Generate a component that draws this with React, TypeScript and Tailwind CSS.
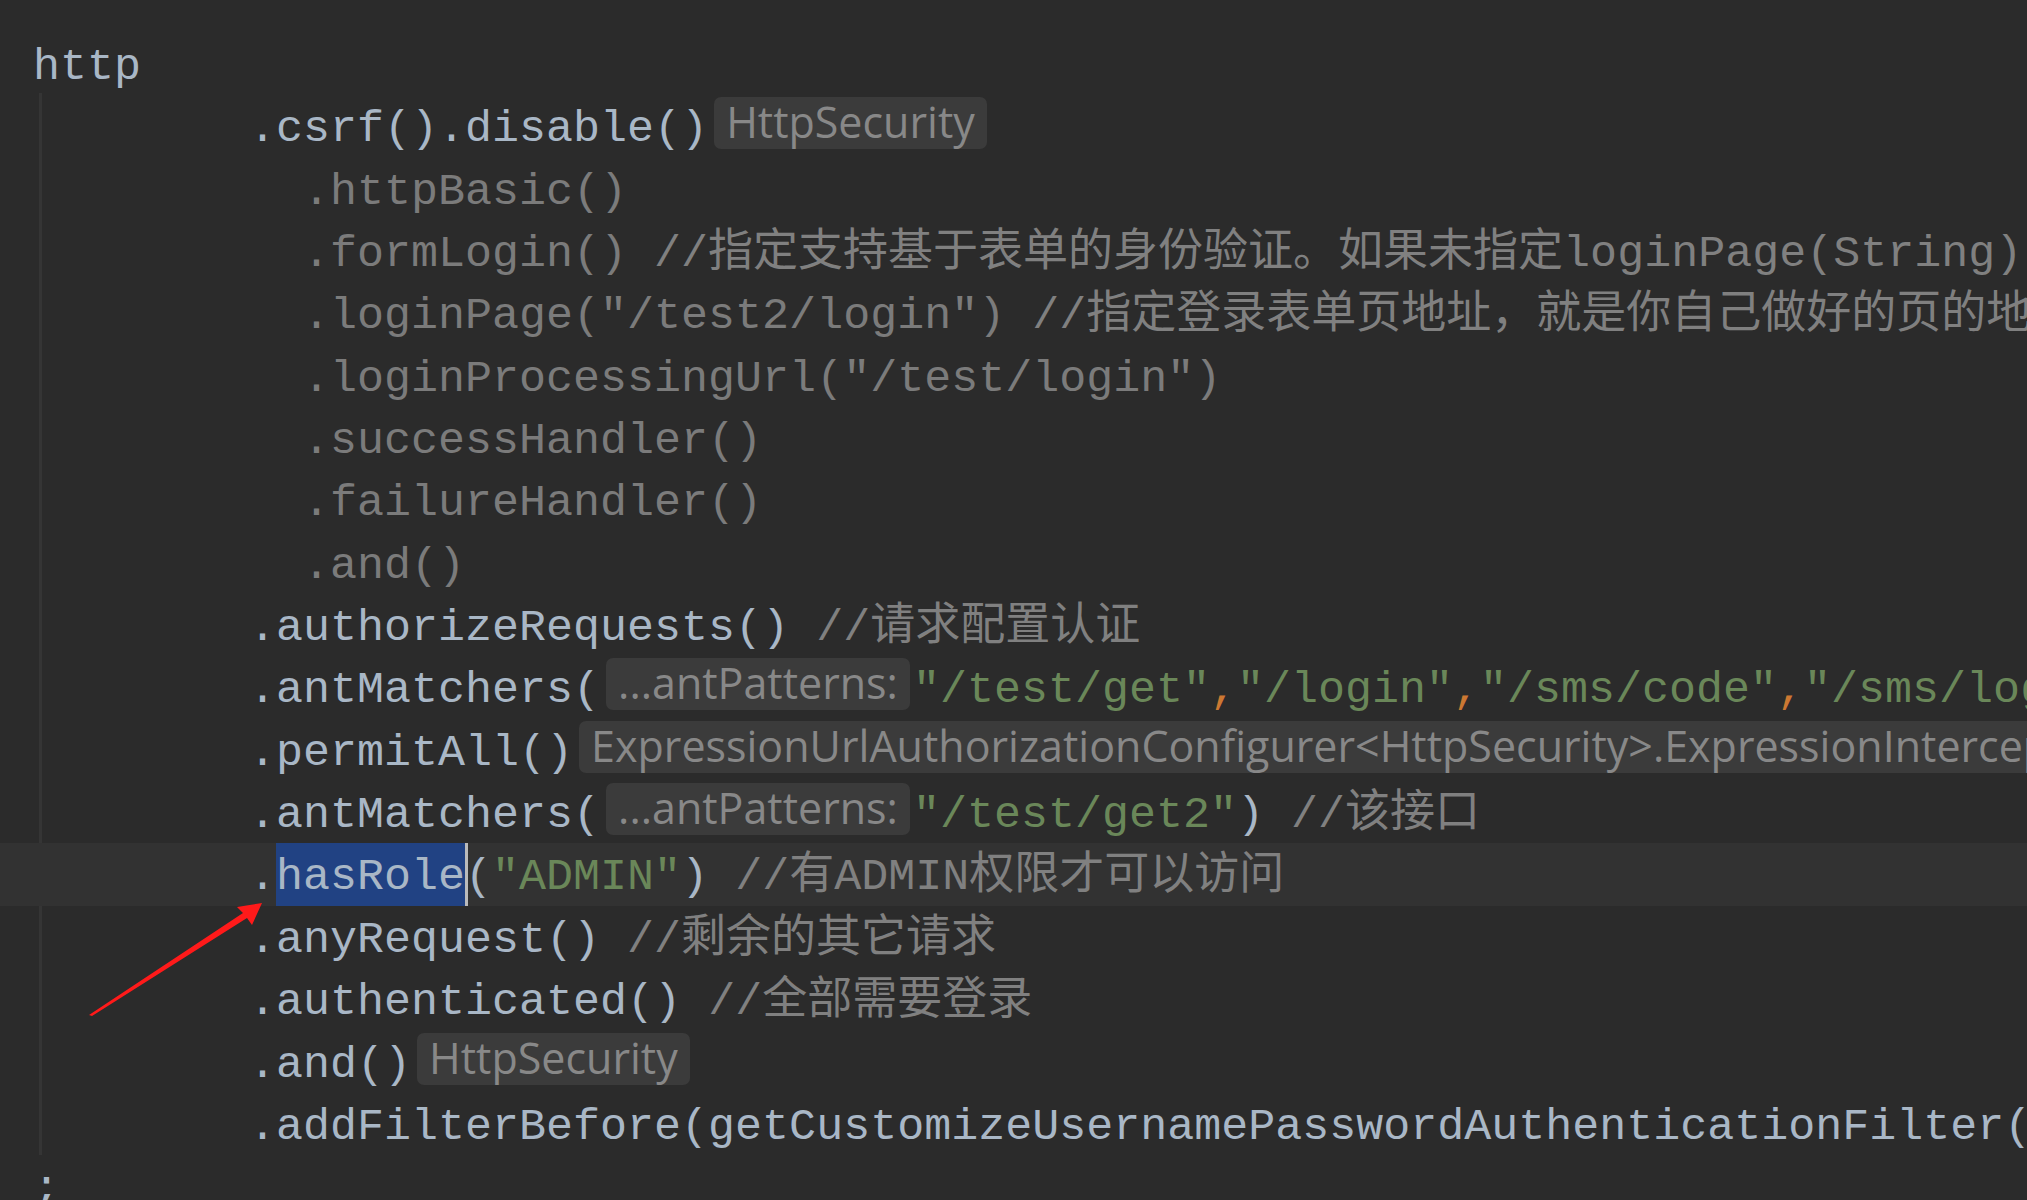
import React from "react";

type Tok = { t: string; c?: string; hint?: boolean; sel?: boolean };

const plain = "text-[#a9b7c6]";
const dim = "text-[#7b7b7b]";
const note = "text-[#808080]";
const str = "text-[#6a8759]";
const comma = "text-[#cc7832]";

// one entry per editor line
const lines: Tok[][] = [
  [{ t: "http", c: plain }],
  [{ t: "        .csrf().disable()", c: plain }, { t: "HttpSecurity", hint: true }],
  [{ t: "          .httpBasic()", c: dim }],
  [
    { t: "          .formLogin() ", c: dim },
    { t: "//指定支持基于表单的身份验证。如果未指定loginPage(String)，则会生成默认登录页面", c: note },
  ],
  [
    { t: '          .loginPage("/test2/login") ', c: dim },
    { t: "//指定登录表单页地址，就是你自己做好的页的地址", c: note },
  ],
  [{ t: '          .loginProcessingUrl("/test/login")', c: dim }],
  [{ t: "          .successHandler()", c: dim }],
  [{ t: "          .failureHandler()", c: dim }],
  [{ t: "          .and()", c: dim }],
  [{ t: "        .authorizeRequests() ", c: plain }, { t: "//请求配置认证", c: note }],
  [
    { t: "        .antMatchers(", c: plain },
    { t: "...antPatterns:", hint: true },
    { t: '"/test/get"', c: str },
    { t: ",", c: comma },
    { t: '"/login"', c: str },
    { t: ",", c: comma },
    { t: '"/sms/code"', c: str },
    { t: ",", c: comma },
    { t: '"/sms/login"', c: str },
    { t: ")", c: plain },
  ],
  [
    { t: "        .permitAll()", c: plain },
    { t: "ExpressionUrlAuthorizationConfigurer<HttpSecurity>.ExpressionInterceptUrlRegistry", hint: true },
  ],
  [
    { t: "        .antMatchers(", c: plain },
    { t: "...antPatterns:", hint: true },
    { t: '"/test/get2"', c: str },
    { t: ") ", c: plain },
    { t: "//该接口", c: note },
  ],
  [
    { t: "        .", c: plain },
    { t: "hasRole", sel: true },
    { t: "(", c: plain },
    { t: '"ADMIN"', c: str },
    { t: ") ", c: plain },
    { t: "//有ADMIN权限才可以访问", c: note },
  ],
  [{ t: "        .anyRequest() ", c: plain }, { t: "//剩余的其它请求", c: note }],
  [{ t: "        .authenticated() ", c: plain }, { t: "//全部需要登录", c: note }],
  [{ t: "        .and()", c: plain }, { t: "HttpSecurity", hint: true }],
  [
    {
      t: "        .addFilterBefore(getCustomizeUsernamePasswordAuthenticationFilter(), UsernamePasswordAuthenticationFilter.class)",
      c: plain,
    },
  ],
  [{ t: ";", c: plain }],
];

const Token = ({ tok }: { tok: Tok }) => {
  if (tok.hint) {
    return (
      <span className="inline-block align-top mt-[2px] h-[52px] leading-[50px] ml-[6px] mr-[3px] px-[12px] rounded-[7px] bg-[#3b3b3b] text-[#888888] font-['Open_Sans',sans-serif] text-[43px]">
        {tok.t}
      </span>
    );
  }
  if (tok.sel) {
    return (
      <span className="inline-block align-top h-[62.35px] leading-[70px] bg-[#214283] text-[#a9b7c6] shadow-[3px_0_0_0_#bbbbbb]">
        {tok.t}
      </span>
    );
  }
  return <span className={tok.c}>{tok.t}</span>;
};

const App = () => {
  return (
    <div className="relative w-[2027px] h-[1200px] overflow-hidden bg-[#2b2b2b] font-['Liberation_Mono','Noto_Sans_CJK_SC',monospace] text-[45px]">
      {/* indent guide */}
      <div className="absolute left-[39px] top-[93px] w-[3px] h-[1062px] bg-[#353535]" />

      <div className="relative pt-[33px]">
        {lines.map((line, i) => (
          <div
            key={i}
            className={`h-[62.35px] leading-[70px] whitespace-pre pl-[33px] ${
              i === 13 ? "bg-[#323232]" : ""
            }`}
          >
            {line.map((tok, j) => (
              <Token key={j} tok={tok} />
            ))}
          </div>
        ))}
      </div>

      {/* red arrow annotation */}
      <svg className="absolute left-0 top-0" width="2027" height="1200">
        <polygon
          points="89,1015 243,913 237,907 262,903 252,925 247,918 92,1016"
          fill="#ff1a1a"
        />
      </svg>
    </div>
  );
};

export default App;
